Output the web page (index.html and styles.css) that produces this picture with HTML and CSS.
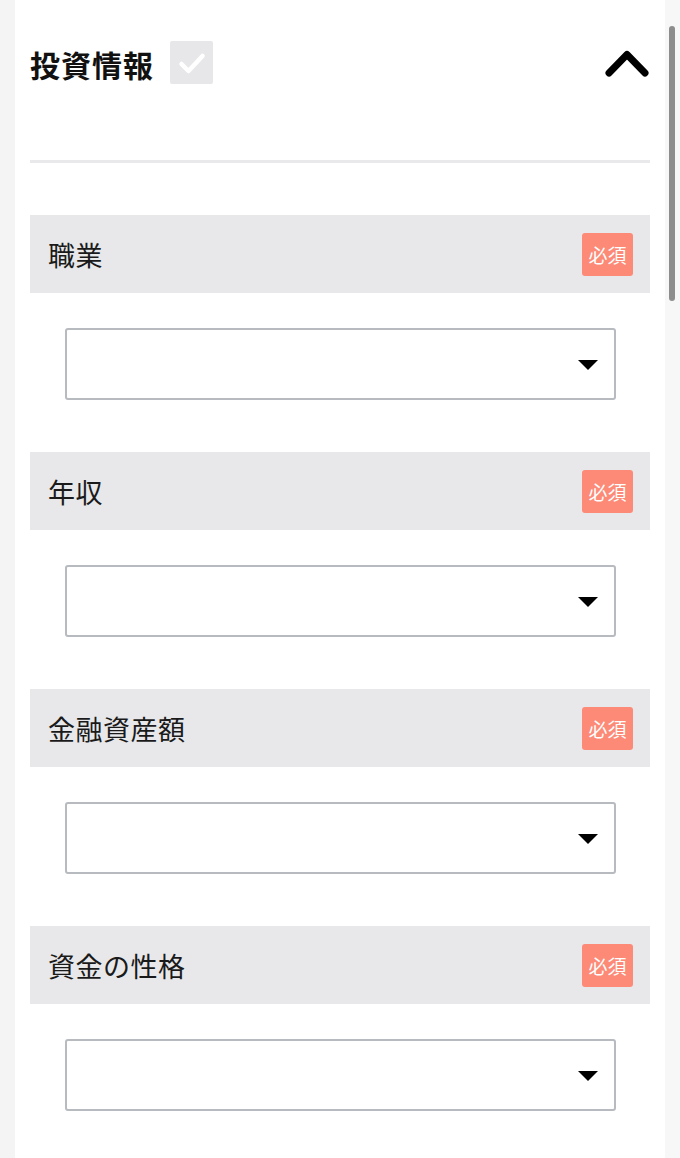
FILE: index.html
```html
<!DOCTYPE html>
<html lang="ja">
<head>
<meta charset="utf-8">
<title>投資情報</title>
<link rel="stylesheet" href="styles.css">
</head>
<body>
<div class="page">
  <div class="gutter"></div>
  <main class="card">
    <div class="head">
      <h2 class="title">投資情報</h2>
      <span class="check">
        <svg width="43" height="43" viewBox="0 0 43 43"><polyline points="11.5,23 18.5,30 32.5,15" fill="none" stroke="#fff" stroke-width="4.5" stroke-linecap="round" stroke-linejoin="round"/></svg>
      </span>
      <span class="spacer"></span>
      <svg class="chev" width="44" height="28" viewBox="0 0 44 28"><polyline points="4,24 22,5.5 40,24" fill="none" stroke="#000" stroke-width="7" stroke-linecap="round" stroke-linejoin="round"/></svg>
    </div>
    <hr class="divider">

    <section class="field">
      <div class="bar"><span class="label">職業</span><span class="req">必須</span></div>
      <div class="select"><svg width="20" height="10" viewBox="0 0 20 10"><polygon points="0,0 20,0 10,10" fill="#000"/></svg></div>
    </section>
    <section class="field">
      <div class="bar"><span class="label">年収</span><span class="req">必須</span></div>
      <div class="select"><svg width="20" height="10" viewBox="0 0 20 10"><polygon points="0,0 20,0 10,10" fill="#000"/></svg></div>
    </section>
    <section class="field">
      <div class="bar"><span class="label">金融資産額</span><span class="req">必須</span></div>
      <div class="select"><svg width="20" height="10" viewBox="0 0 20 10"><polygon points="0,0 20,0 10,10" fill="#000"/></svg></div>
    </section>
    <section class="field">
      <div class="bar"><span class="label">資金の性格</span><span class="req">必須</span></div>
      <div class="select"><svg width="20" height="10" viewBox="0 0 20 10"><polygon points="0,0 20,0 10,10" fill="#000"/></svg></div>
    </section>
  </main>
  <div class="track"><div class="thumb"></div></div>
</div>
</body>
</html>
```

FILE: styles.css
```css
html, body {
  margin: 0;
  padding: 0;
  height: 100%;
  overflow: hidden;
  background: #f4f4f5;
  font-family: "Noto Sans CJK JP", "Noto Sans", sans-serif;
}
.page {
  display: flex;
  height: 1158px;
}
.gutter {
  width: 15px;
  flex: none;
  background: #f4f4f5;
}
.card {
  width: 620px;
  flex: none;
  background: #fff;
  padding: 41px 15px 0 15px;
}
.head {
  display: flex;
  align-items: center;
  height: 43px;
}
.title {
  margin: 0;
  font-size: 30px;
  font-weight: 700;
  color: #111;
  line-height: 1;
  letter-spacing: 1px;
  margin-top: 2px;
}
.check {
  display: block;
  width: 43px;
  height: 43px;
  margin-left: 16px;
  background: #e7e7ea;
  border-radius: 2px;
}
.check svg { display: block; }
.spacer { flex: 1; }
.chev { display: block; margin-right: 1px; margin-top: 0; }
.divider {
  margin: 76px 0 0 0;
  border: 0;
  height: 3px;
  background: #e9e9eb;
}
.field {
  padding-top: 52px;
}
.bar {
  display: flex;
  align-items: center;
  justify-content: space-between;
  height: 78px;
  background: #e8e8ea;
  padding: 0 17px 0 18px;
}
.label {
  font-size: 27px;
  letter-spacing: 0.5px;
  color: #1a1a1a;
  line-height: 1;
}
.req {
  display: flex;
  align-items: center;
  justify-content: center;
  width: 51px;
  height: 43px;
  background: #fd8a77;
  color: #fff;
  font-size: 19px;
  border-radius: 3px;
  margin-top: 1px;
}
.select {
  display: flex;
  align-items: center;
  justify-content: flex-end;
  margin: 35px 34px 0 35px;
  height: 68px;
  border: 2px solid #b7babf;
  border-radius: 3px;
  padding-right: 16px;
}
.select svg { display: block; margin-top: 1px; }
.track {
  flex: none;
  width: 15px;
  background: #f7f7f7;
  position: relative;
}
.thumb {
  position: absolute;
  left: 4px;
  top: 26px;
  width: 6px;
  height: 275px;
  border-radius: 3px;
  background: #8d8d8d;
}
```
